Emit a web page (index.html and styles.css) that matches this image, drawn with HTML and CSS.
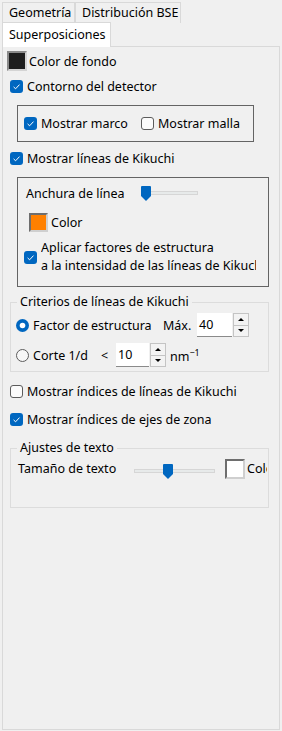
FILE: index.html
```html
<!DOCTYPE html>
<html lang="es">
<head>
  <meta charset="UTF-8" />
  <title>Superposiciones</title>
  <link rel="stylesheet" href="styles.css">
</head>
<body>
  <div class="tabs">
    <div class="tab-row">
      <div class="tab tab-geo">Geometría</div>
      <div class="tab tab-bse">Distribución BSE</div>
    </div>
    <div class="tab-row">
      <div class="tab tab-active">Superposiciones</div>
    </div>
  </div>

  <div class="page">
    <div class="row-bg">
      <span class="swatch swatch-dark"></span>
      <span>Color de fondo</span>
    </div>

    <div class="check row-contorno">
      <svg class="cb" viewBox="0 0 13 13"><rect x="0" y="0" width="13" height="13" rx="3" fill="#0067c0"/><path d="M3.6 6.9 L5.6 8.8 L9.5 4.6" fill="none" stroke="#fff" stroke-width="1"/></svg>
      <span>Contorno del detector</span>
    </div>

    <div class="frame frame-marco">
      <div class="check cell-marco">
        <svg class="cb" viewBox="0 0 13 13"><rect x="0" y="0" width="13" height="13" rx="3" fill="#0067c0"/><path d="M3.6 6.9 L5.6 8.8 L9.5 4.6" fill="none" stroke="#fff" stroke-width="1"/></svg>
        <span>Mostrar marco</span>
      </div>
      <div class="check">
        <svg class="cb" viewBox="0 0 13 13"><rect x="0.5" y="0.5" width="12" height="12" rx="2.5" fill="#fbfbfb" stroke="#5c5c5c"/></svg>
        <span>Mostrar malla</span>
      </div>
    </div>

    <div class="check row-kikuchi">
      <svg class="cb" viewBox="0 0 13 13"><rect x="0" y="0" width="13" height="13" rx="3" fill="#0067c0"/><path d="M3.6 6.9 L5.6 8.8 L9.5 4.6" fill="none" stroke="#fff" stroke-width="1"/></svg>
      <span>Mostrar líneas de Kikuchi</span>
    </div>

    <div class="frame frame-lineas">
      <div class="row-anchura">
        <span class="lbl-anchura">Anchura de línea</span>
        <div class="slider slider-anchura">
          <div class="track"></div>
          <svg class="thumb" style="left: 0px" viewBox="0 0 10 15"><path d="M1 0 H9 Q10 0 10 1 V10 L5 15 L0 10 V1 Q0 0 1 0 Z" fill="#0067c0"/></svg>
        </div>
      </div>
      <div class="row-color">
        <span class="swatch swatch-orange"></span>
        <span>Color</span>
      </div>
      <div class="check row-apply">
        <svg class="cb" viewBox="0 0 13 13"><rect x="0" y="0" width="13" height="13" rx="3" fill="#0067c0"/><path d="M3.6 6.9 L5.6 8.8 L9.5 4.6" fill="none" stroke="#fff" stroke-width="1"/></svg>
        <span class="apply-text">Aplicar factores de estructura<br>a la intensidad de las líneas de Kikuchi</span>
      </div>
    </div>

    <fieldset class="group group-criterios">
      <legend>Criterios de líneas de Kikuchi</legend>
      <div class="crit-row">
        <div class="check cell-factor">
          <svg class="cb" viewBox="0 0 13 13"><circle cx="6.5" cy="6.5" r="6.5" fill="#0067c0"/><circle cx="6.5" cy="6.5" r="2.8" fill="#fff"/></svg>
          <span>Factor de estructura</span>
        </div>
        <span class="cell-max">Máx.</span>
        <span class="num num-max">40</span>
        <div class="spin">
          <span class="spin-btn"><i class="up"></i></span>
          <span class="spin-btn"><i class="down"></i></span>
        </div>
      </div>
      <div class="crit-row crit-row2">
        <div class="check cell-corte">
          <svg class="cb" viewBox="0 0 13 13"><circle cx="6.5" cy="6.5" r="6" fill="#f7f7f7" stroke="#5c5c5c"/></svg>
          <span>Corte 1/d</span>
        </div>
        <span class="cell-lt">&lt;</span>
        <span class="num num-corte">10</span>
        <div class="spin">
          <span class="spin-btn"><i class="up"></i></span>
          <span class="spin-btn"><i class="down"></i></span>
        </div>
        <span class="unit">nm<sup>−1</sup></span>
      </div>
    </fieldset>

    <div class="check row-idx-lineas">
      <svg class="cb" viewBox="0 0 13 13"><rect x="0.5" y="0.5" width="12" height="12" rx="2.5" fill="#fbfbfb" stroke="#5c5c5c"/></svg>
      <span>Mostrar índices de líneas de Kikuchi</span>
    </div>

    <div class="check row-idx-ejes">
      <svg class="cb" viewBox="0 0 13 13"><rect x="0" y="0" width="13" height="13" rx="3" fill="#0067c0"/><path d="M3.6 6.9 L5.6 8.8 L9.5 4.6" fill="none" stroke="#fff" stroke-width="1"/></svg>
      <span>Mostrar índices de ejes de zona</span>
    </div>

    <fieldset class="group group-texto">
      <legend>Ajustes de texto</legend>
      <div class="texto-row">
        <span class="lbl-tamano">Tamaño de texto</span>
        <div class="slider slider-tamano">
          <div class="track"></div>
          <svg class="thumb" style="left: 29px" viewBox="0 0 10 15"><path d="M1 0 H9 Q10 0 10 1 V10 L5 15 L0 10 V1 Q0 0 1 0 Z" fill="#0067c0"/></svg>
        </div>
        <span class="swatch swatch-white"></span>
        <span class="lbl-col">Color</span>
      </div>
    </fieldset>
  </div>
</body>
</html>
```

FILE: styles.css
```css
body {
  margin: 0;
  background: #f0f0f0;
  font-family: "Noto Sans", sans-serif;
  font-size: 12.5px;
  color: #000;
  width: 282px;
  height: 731px;
  overflow: hidden;
}

/* pestañas */
.tabs {
  padding: 2px 0 0 2px;
}

.tab-row {
  display: flex;
}

.tab {
  box-sizing: border-box;
  height: 21px;
  line-height: 19px;
  border: 1px solid #d9d9d9;
  border-bottom: none;
  background: #f0f0f0;
  padding-left: 6px;
  white-space: nowrap;
}

.tab-geo { width: 73px; }
.tab-bse { width: 106px; }

.tab-active {
  position: relative;
  z-index: 1;
  margin-top: -1px;
  width: 109px;
  height: 25px;
  line-height: 23px;
  background: #fff;
}

.page {
  box-sizing: border-box;
  margin: -1px 0 0 2px;
  width: 278px;
  height: 684px;
  border: 1px solid #d9d9d9;
  padding-left: 7px;
}

/* controles */
.check {
  display: flex;
  align-items: center;
  gap: 4px;
  height: 13px;
  white-space: nowrap;
}

.cb {
  width: 13px;
  height: 13px;
  flex: none;
}

.swatch {
  box-sizing: border-box;
  flex: none;
  width: 20px;
  height: 20px;
  border: 2px solid;
  border-color: #6e6e6e #cfcfcf #cfcfcf #6e6e6e;
}

.swatch-dark { background: #1e1e1e; border-color: #8a8a8a #d4d4d4 #d4d4d4 #8a8a8a; }
.swatch-orange { background: #ff8000; width: 19px; height: 19px; }
.swatch-white { background: #fff; }

.row-bg {
  display: flex;
  align-items: center;
  gap: 2px;
  height: 20px;
  margin: 4px 0 0 -3px;
}

.row-contorno { margin-top: 9px; }

.frame {
  box-sizing: border-box;
  border: 1px solid #646464;
  margin-left: 7px;
}

.frame-marco {
  display: flex;
  width: 237px;
  height: 37px;
  margin-top: 12px;
  padding: 11px 0 0 6px;
}

.cell-marco { width: 117px; }

.row-kikuchi { margin-top: 10px; }

.frame-lineas {
  width: 252px;
  height: 110px;
  margin-top: 12px;
  padding: 8px 0 0 8px;
}

.row-anchura {
  display: flex;
  align-items: center;
  height: 15px;
}

.lbl-anchura { width: 115px; }

.slider {
  position: relative;
  height: 15px;
  flex: none;
}

.slider-anchura { width: 57px; }

.track {
  position: absolute;
  left: 0;
  right: 0;
  top: 5px;
  height: 4px;
  box-sizing: border-box;
  background: #e7eaea;
  border: 1px solid #d6d6d6;
}

.thumb {
  position: absolute;
  top: 0;
  width: 10px;
  height: 15px;
}

.row-color {
  display: flex;
  align-items: center;
  gap: 3px;
  height: 19px;
  margin: 12px 0 0 3px;
}

.row-apply {
  height: 36px;
  margin: 7px 0 0 -2px;
}

.apply-text {
  width: 215px;
  overflow: hidden;
  line-height: 18px;
}

/* grupos */
.group {
  box-sizing: border-box;
  width: 259px;
  margin: 0;
  padding: 0;
  border: 1px solid #dcdcdc;
  min-inline-size: 0;
}

.group legend {
  margin-left: 6px;
  padding: 0 3px;
  line-height: 18px;
}

.group-criterios {
  margin-top: 6px;
  padding-bottom: 4px;
}

.crit-row {
  display: flex;
  align-items: center;
  height: 24px;
  margin: 2px 0 0 5px;
}

.crit-row2 { margin-top: 6px; }

.cell-factor { width: 147px; }
.cell-max { width: 34px; }
.cell-corte { width: 84px; }
.cell-lt { width: 16px; padding-left: 1px; box-sizing: border-box; }

.num {
  box-sizing: border-box;
  height: 24px;
  line-height: 23px;
  padding-left: 2px;
  background: #fff;
  border-bottom: 1px solid #8a8a8a;
}

.num-max { width: 35px; }
.num-corte { width: 33px; }

.spin {
  display: flex;
  flex-direction: column;
  width: 16px;
  height: 24px;
  margin-left: 1px;
}

.spin-btn {
  box-sizing: border-box;
  flex: 1;
  display: flex;
  align-items: center;
  justify-content: center;
  background: #f3f3f3;
  border: 1px solid #c4c4c4;
}

.spin-btn + .spin-btn { border-top: none; }

.up, .down {
  width: 0;
  height: 0;
  border-left: 3px solid transparent;
  border-right: 3px solid transparent;
}

.up { border-bottom: 3px solid #000; }
.down { border-top: 3px solid #000; }

.unit { margin-left: 4px; }

.unit sup {
  font-size: 9px;
  vertical-align: 5px;
}

.row-idx-lineas { margin-top: 13px; }
.row-idx-ejes { margin-top: 15px; }

.group-texto {
  margin-top: 13px;
  padding-bottom: 28px;
}

.texto-row {
  display: flex;
  align-items: flex-start;
  height: 20px;
  margin: 2px 0 0 7px;
}

.lbl-tamano {
  width: 116px;
  line-height: 20px;
}

.slider-tamano {
  width: 81px;
  margin-top: 5px;
}

.swatch-white { margin-left: 10px; }

.lbl-col {
  width: 20px;
  margin-left: 2px;
  overflow: hidden;
  line-height: 20px;
  white-space: nowrap;
}
```
